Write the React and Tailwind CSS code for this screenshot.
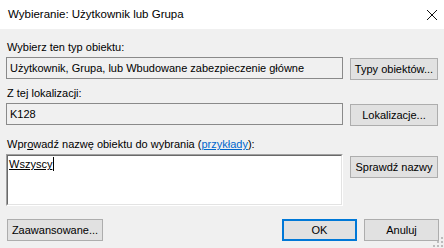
export default function App() {
  const font = { fontFamily: '"Liberation Sans", Arial, sans-serif' };
  const btn =
    'h-[22px] flex items-center justify-center border border-[#adadad] bg-[#e1e1e1] text-[11px] text-black';

  return (
    <div className="w-[444px] h-[248px] bg-[#f0f0f0] flex flex-col text-black" style={font}>
      {/* title bar */}
      <div className="h-[29px] bg-white flex items-center justify-between pl-[8px] pr-[4px]">
        <span className="text-[11.5px]">Wybieranie: Użytkownik lub Grupa</span>
        <svg width="12" height="12" viewBox="0 0 12 12" className="mr-[2px]">
          <path d="M1 1 L11 11 M11 1 L1 11" stroke="#111" strokeWidth="1" />
        </svg>
      </div>

      <div className="relative flex-1 flex flex-col pl-[6px] pt-[10px] text-[11px]">
        <div className="h-[16px] leading-[16px] pl-[1px]">Wybierz ten typ obiektu:</div>
        <div className="flex items-start mt-[2px]">
          <div className="w-[337px] h-[22px] border border-[#8a8a8a] bg-[#f0f0f0] flex items-center pl-[3px]">
            Użytkownik, Grupa, lub Wbudowane zabezpieczenie główne
          </div>
          <div className={`${btn} w-[88px] ml-[7px] mt-[1px]`}>Typy obiektów...</div>
        </div>

        <div className="h-[16px] leading-[16px] pl-[1px] mt-[5px]">Z tej lokalizacji:</div>
        <div className="flex items-start mt-[2px]">
          <div className="w-[337px] h-[22px] border border-[#8a8a8a] bg-[#f0f0f0] flex items-center pl-[3px]">
            K128
          </div>
          <div className={`${btn} w-[88px] ml-[7px] mt-[1px]`}>Lokalizacje...</div>
        </div>

        <div className="h-[16px] leading-[16px] pl-[1px] mt-[10px]">
          Wpr<span className="underline">o</span>wadź nazwę obiektu do wybrania (
          <span className="text-[#0066cc] underline">przykłady</span>):
        </div>
        <div className="flex items-start mt-[2px]">
          <div className="w-[337px] h-[52px] border-t border-l border-t-[#a0a0a0] border-l-[#a0a0a0] border-b border-r border-b-white border-r-white">
            <div className="h-full border-t border-l border-t-[#696969] border-l-[#696969] border-b border-r border-b-[#e3e3e3] border-r-[#e3e3e3] bg-white pl-[1px] pt-[1px] leading-[15px]">
              <span className="underline">Wszyscy</span>
              <span className="inline-block w-[1px] h-[14px] bg-black align-[-3px] ml-[1px]" />
            </div>
          </div>
          <div className={`${btn} w-[88px] ml-[7px] mt-[2px]`}>Sprawdź nazwy</div>
        </div>

        <div className="flex items-center mt-[13px] pr-[5px]">
          <div className={`${btn} w-[96px] ml-[1px]`}>Zaawansowane...</div>
          <div className="flex-1" />
          <div className="h-[22px] w-[75px] flex items-center justify-center border-2 border-[#0078d7] bg-[#e1e1e1]">
            OK
          </div>
          <div className={`${btn} w-[75px] ml-[7px]`}>Anuluj</div>
        </div>

        {/* resize grip */}
        <svg width="10" height="10" viewBox="0 0 10 10" className="absolute right-[1px] bottom-[1px]">
          <g fill="#bcbcbc">
            <rect x="8" y="0" width="2" height="2" />
            <rect x="4" y="4" width="2" height="2" />
            <rect x="8" y="4" width="2" height="2" />
            <rect x="0" y="8" width="2" height="2" />
            <rect x="4" y="8" width="2" height="2" />
            <rect x="8" y="8" width="2" height="2" />
          </g>
        </svg>
      </div>
    </div>
  );
}
